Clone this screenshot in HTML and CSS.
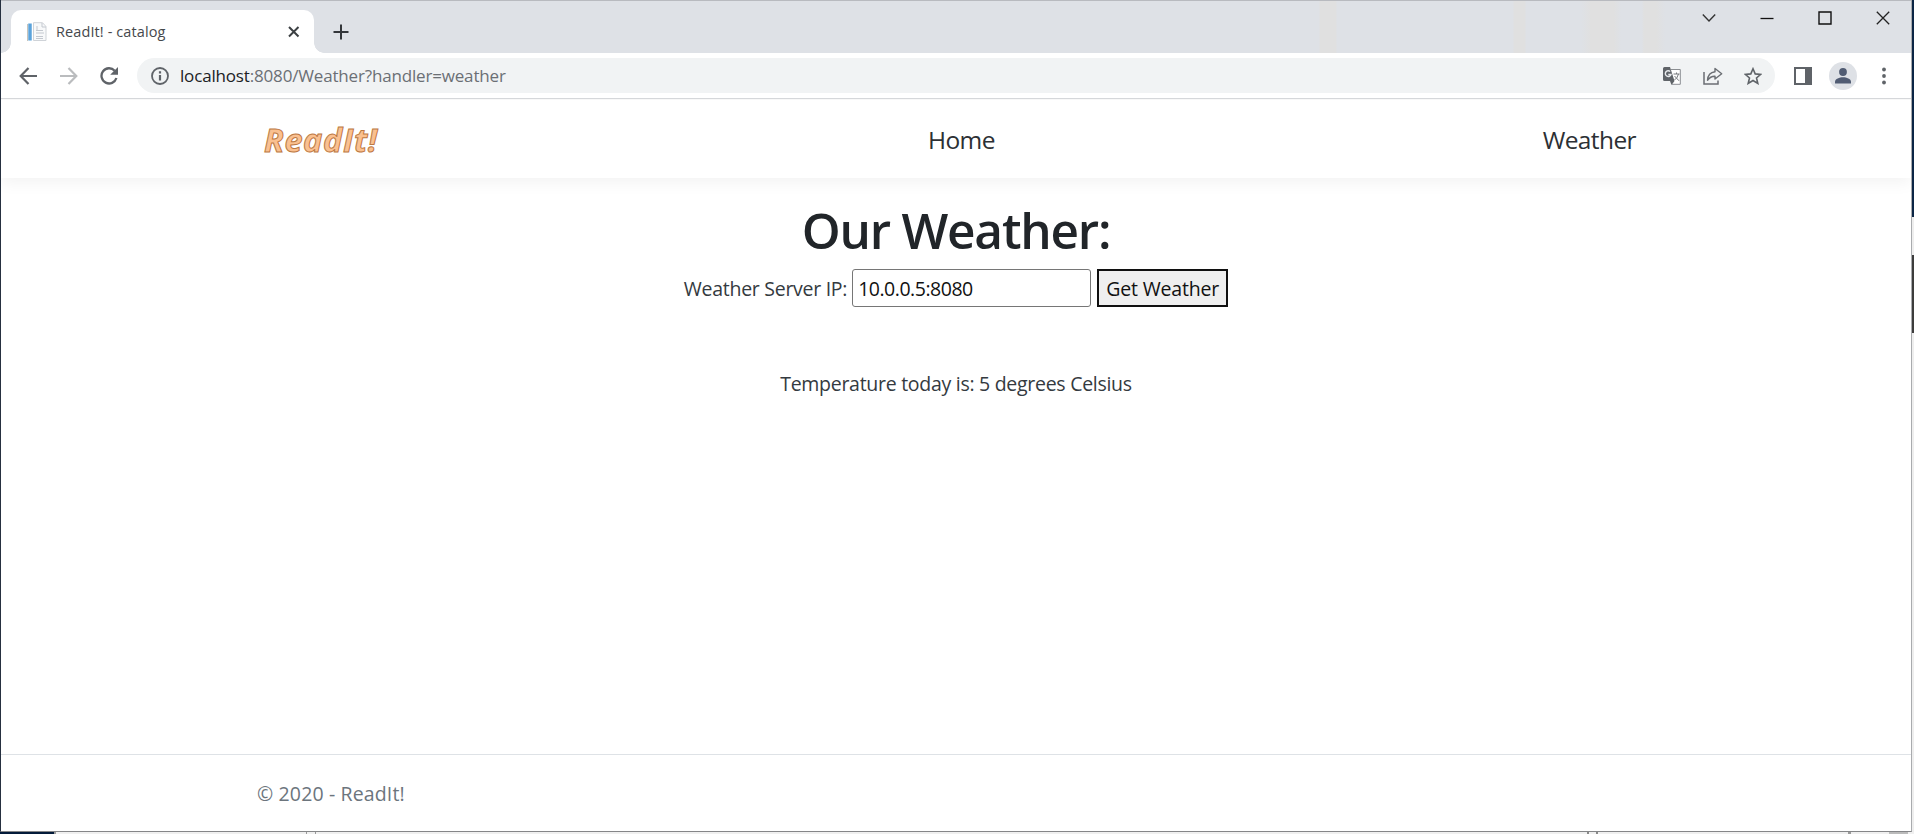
FILE: index.html
```html
<!DOCTYPE html>
<html lang="en">
<head>
<meta charset="utf-8">
<title>ReadIt! - catalog</title>
<link rel="stylesheet" href="styles.css">
</head>
<body>
<div class="desktop">
  <div class="window">
    <div class="tabstrip">
      <div class="tab">
        <svg class="favicon" width="20" height="20" viewBox="0 0 20 20"><path d="M.5 2v17" stroke="#c9c4ba"/><path d="M3 1.5v17" stroke="#5ba3db" stroke-width="3.5"/><path d="M6.5.7h9l3.500 3.800v14H6.500z" fill="#f8f9fa" stroke="#cfd3d8"/><path d="M15 1v4h4M10 4v4M9 8.500h7M9 11h8M9 14.500h7M9 16.500h7" fill="none" stroke="#c3c8cf"/></svg>
        <span class="tab-title">ReadIt! - catalog</span>
        <svg class="tab-close" width="12" height="12" viewBox="0 0 12 12"><path d="M1 1l9.500 9.500M10.500 1L1 10.500" stroke="#3c4043" stroke-width="2"/></svg>
      </div>
      <svg class="newtab" width="16" height="16" viewBox="0 0 16 16"><path d="M8 .5v15M.5 8h15" stroke="#33363a" stroke-width="2"/></svg>
      <div class="controls">
        <svg width="14" height="14" viewBox="0 0 14 14"><path d="M.8 3.500L7 10l6.200-6.500" fill="none" stroke="#333" stroke-width="1.400"/></svg>
        <svg width="14" height="14" viewBox="0 0 14 14"><path d="M.5 7.500h13" stroke="#111" stroke-width="1.300"/></svg>
        <svg width="14" height="14" viewBox="0 0 14 14"><path d="M1 1h12v12H1z" fill="none" stroke="#111" stroke-width="1.400"/></svg>
        <svg width="14" height="14" viewBox="0 0 14 14"><path d="M.8.8l12.400 12.400M13.200.8L.8 13.200" stroke="#222" stroke-width="1.300"/></svg>
      </div>
    </div>
    <div class="toolbar">
      <svg class="back" width="18" height="18" viewBox="0 0 18 18"><path d="M9.500 1L1.700 9l7.800 8M2 9h16" fill="none" stroke="#5f6368" stroke-width="2.200"/></svg>
      <svg class="forward" width="18" height="18" viewBox="0 0 18 18"><path d="M8.500 1l7.800 8-7.800 8M16 9H0" fill="none" stroke="#babcbe" stroke-width="2.200"/></svg>
      <svg class="reload" width="18" height="18" viewBox="0 0 18 18"><path d="M14.700 3.700A7.600 7.600 0 1 0 16.400 11" fill="none" stroke="#5f6368" stroke-width="2.300"/><path d="M18 0v7.800h-7.800z" fill="#5f6368"/></svg>
      <div class="omnibox">
        <svg class="info" width="18" height="18" viewBox="0 0 18 18"><circle cx="9" cy="9" r="8" fill="none" stroke="#5f6368" stroke-width="1.800"/><path d="M9 8v5.500M9 4.200v2.200" stroke="#5f6368" stroke-width="2.200"/></svg>
        <span class="url"><span class="host">localhost</span>:8080/Weather?handler=weather</span>
        <div class="omni-icons">
          <svg width="18" height="18" viewBox="0 0 18 18"><path d="M8 2.500h9.300v14.800H9" fill="#fff" stroke="#8a8d91"/><path d="M1.500 0H7l4.500 14H1.500Q0 14 0 12.500v-11Q0 0 1.500 0zM7 14h4.500L8.500 18z" fill="#5f6368"/><path d="M7.200 4.500A2.900 2.900 0 1 0 8 7.500H5.300" fill="none" stroke="#e8eaed" stroke-width="1.400"/><path d="M10.500 7h6M13.500 5.500V7M15.500 7q-1 4-4 6M11.500 9l4.500 4.800" fill="none" stroke="#76797d"/></svg>
          <svg width="20" height="18" viewBox="0 0 20 18"><path d="M1 5v12h14v-3.500" fill="none" stroke="#6b6e73" stroke-width="1.500"/><path d="M12 1.500l6.700 5.300-6.700 5.200V9.200Q7.500 9 4.500 13.300 5 5.500 12 4.700z" fill="none" stroke="#6b6e73" stroke-width="1.400" stroke-linejoin="round"/></svg>
          <svg width="18" height="18" viewBox="0 0 18 18"><path d="M9 1.800l2.200 5.100 5.500.5-4.200 3.600 1.300 5.400L9 13.500l-4.800 2.900L5.500 11 1.300 7.400l5.500-.5z" fill="none" stroke="#5f6368" stroke-width="1.600"/></svg>
        </div>
      </div>
      <svg class="panel" width="18" height="18" viewBox="0 0 18 18"><path d="M0 0h18v18H0zM2 2v14h9V2z" fill="#5f6368" fill-rule="evenodd"/></svg>
      <svg class="avatar" width="28" height="28" viewBox="0 0 28 28"><circle cx="14" cy="14" r="14" fill="#dee1e6"/><circle cx="14" cy="10" r="3.900" fill="#515c73"/><path d="M6 21.500v-1.700c0-3 4.500-4.600 8-4.600s8 1.600 8 4.600v1.700z" fill="#515c73"/></svg>
      <svg class="menu" width="4" height="18" viewBox="0 0 4 18"><g fill="#5f6368"><circle cx="2" cy="2.500" r="1.900"/><circle cx="2" cy="9" r="1.900"/><circle cx="2" cy="15.500" r="1.900"/></g></svg>
    </div>
    <header class="site-nav">
      <a class="brand">ReadIt!</a>
      <a class="nav-link home">Home</a>
      <a class="nav-link weather">Weather</a>
    </header>
    <main class="content">
      <h1>Our Weather:</h1>
      <form class="form">
        <label for="ip">Weather Server IP:</label>
        <input id="ip" type="text" value="10.0.0.5:8080">
        <button type="button">Get Weather</button>
      </form>
      <p class="result">Temperature today is: 5 degrees Celsius</p>
    </main>
    <footer class="footer"><span>© 2020 - ReadIt!</span></footer>
  </div>
  <div class="behind-right"><i class="navy"></i><i class="light"></i><i class="dark"></i></div>
  <div class="behind-bottom"></div>
</div>
</body>
</html>
```
FILE: styles.css
```css
* { box-sizing: border-box; }
body { margin: 0; font-family: "Open Sans", "Noto Sans", sans-serif; color: #212529; }
svg { display: block; flex: none; }
.desktop { width: 1914px; height: 834px; display: grid; grid-template-columns: 1912px 2px; grid-template-rows: 832px 2px; overflow: hidden; background: #fff; }
.window { border-left: 1px solid #263040; border-right: 1px solid #a9abae; border-bottom: 1px solid #858688; background: #fff; display: flex; flex-direction: column; white-space: nowrap; }
.tabstrip { height: 53px; background: linear-gradient(90deg, transparent 1318px, #e0e0e0 1319px 1335px, transparent 1336px 1512px, #e0e0e0 1513px 1524px, transparent 1525px 1580px, #e0e0e0 1590px 1613px, transparent 1620px 1641px, #e0e0e0 1643px 1655px, transparent 1664px), #dee1e6; border-top: 1px solid #b8babf; display: flex; align-items: flex-start; }
.tab { position: relative; margin: 9px 0 0 10px; width: 303px; height: 43px; background: #fff; border-radius: 10px 10px 0 0; display: flex; align-items: center; padding: 0 14px 0 16px; }
.tab::before, .tab::after { content: ""; position: absolute; bottom: 0; width: 10px; height: 10px; }
.tab::before { left: -10px; background: radial-gradient(circle at 0 0, transparent 9.5px, #fff 10px); }
.tab::after { right: -10px; background: radial-gradient(circle at 100% 0, transparent 9.5px, #fff 10px); }
.tab-title { margin-left: 9px; font-size: 14.5px; line-height: 20px; color: #45484c; flex: 1; letter-spacing: .1px; }
.newtab { margin: 23px 0 0 19px; }
.controls { margin-left: auto; display: flex; gap: 44px; padding: 10px 21px 0 0; }
.toolbar { height: 46px; border-bottom: 1px solid #d5d7da; display: flex; align-items: center; padding-left: 18px; }
.forward { margin-left: 23px; }
.reload { margin-left: 22px; }
.omnibox { margin-left: 19px; width: 1638px; height: 35px; border-radius: 18px; background: #f1f3f4; display: flex; align-items: center; padding: 0 13px 0 14px; }
.url { margin-left: 11px; font-size: 17px; line-height: 24px; color: #6b6f74; flex: 1; letter-spacing: -.17px; }
.host { color: #202124; }
.omni-icons { display: flex; gap: 21.500px; }
.panel { margin-left: 19px; }
.avatar { margin-left: 17px; }
.menu { margin-left: 25px; }
.site-nav { height: 79px; box-shadow: 0 5px 15px rgba(0,0,0,.05); border-top: 1px solid #f8f8f8; display: flex; align-items: center; padding: 2px 275px 0 263px; clip-path: inset(0 0 -30px 0); }
.brand { width: 120px; font-size: 32.5px; line-height: 44px; font-weight: 700; font-style: italic; letter-spacing: .6px; color: #fac090; -webkit-text-stroke: 1px #bd7842; }
.nav-link { font-size: 24.5px; line-height: 36px; letter-spacing: -.6px; color: #2c3034; }
.home { margin-left: 544px; }
.weather { margin-left: auto; }
.content { flex: 1; padding-top: 22px; display: flex; flex-direction: column; align-items: center; font-size: 19.5px; letter-spacing: -.28px; }
h1 { margin: 0; font-size: 49.5px; line-height: 60px; font-weight: 600; letter-spacing: -1.2px; }
.form { margin-top: 9px; height: 38px; display: flex; align-items: center; color: #343a40; }
input { width: 239px; height: 38px; margin: 0 6px 0 5px; padding: 0 6px 0 5px; border: 1px solid #767676; border-radius: 3px; font: inherit; letter-spacing: -.48px; color: #111; }
button { width: 131px; height: 38px; padding: 0; border: 2px solid #101010; background: #efefef; font: inherit; letter-spacing: -.2px; color: #111; }
.result { margin: 62px 0 0; line-height: 30px; color: #343a40; }
.footer { height: 77px; border-top: 1px solid #dee2e6; padding: 24px 0 0 256px; font-size: 19.5px; line-height: 30px; letter-spacing: .14px; color: #6c757d; }
.behind-right { display: flex; flex-direction: column; background: #eee; }
.navy { height: 217px; background: #0b2545; }
.light { height: 38px; background: #eee; }
.dark { height: 78px; background: #3c3c3c; }
.behind-bottom { grid-column: 1 / -1; background: linear-gradient(90deg, #031b3a 54px, #999 54px 56px, transparent 56px 306px, #999 306px 307px, transparent 307px 315px, #999 315px 316px, transparent 316px 1587px, #888 1587px 1589px, transparent 1589px 1596px, #888 1596px 1598px, transparent 1598px 1848px, #999 1848px 1851px, transparent 1851px 1889px, #bbb 1889px 1908px, transparent 1908px), #f0f0f0; }
```
